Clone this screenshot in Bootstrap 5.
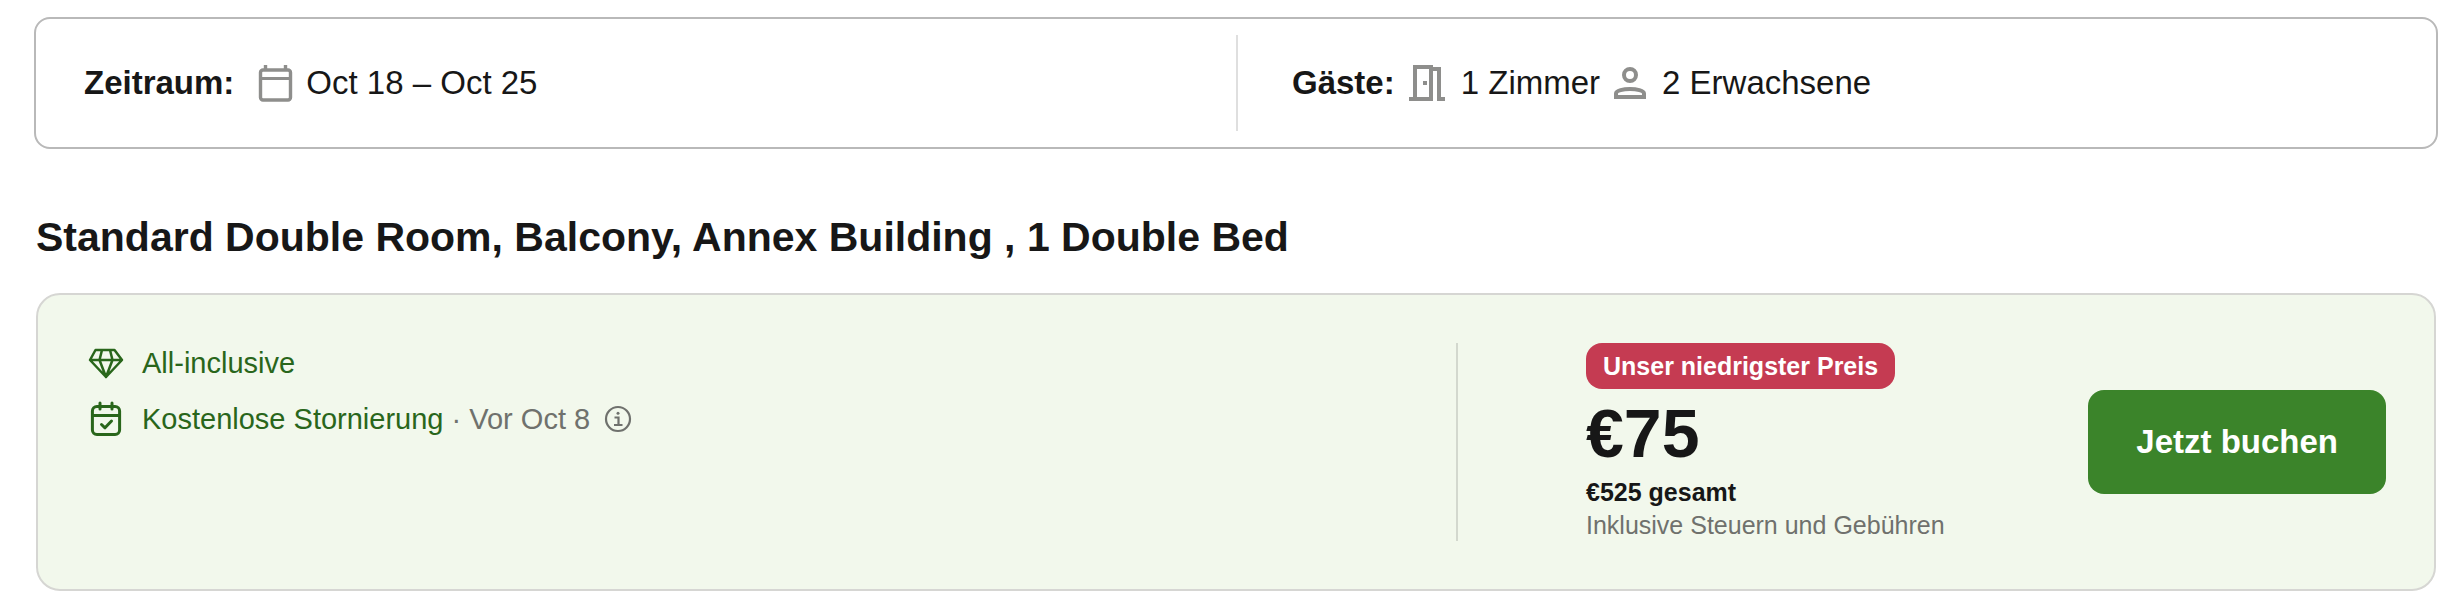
<!DOCTYPE html>
<html lang="de">
<head>
<meta charset="utf-8">
<meta name="viewport" content="width=device-width, initial-scale=1">
<title>Zimmerangebot</title>
<link rel="stylesheet" href="https://cdn.jsdelivr.net/npm/bootstrap@5.3.0/dist/css/bootstrap.min.css">
<style>
body{font-family:"Liberation Sans",Arial,sans-serif;color:#171717;background:#fff;font-size:29px;line-height:40px}
.page{padding:17px 16px 24px 34px}
.stay{border:2px solid #b9b9b9;border-radius:16px;padding:16px 0;font-size:33px;line-height:40px}
.stay-part{min-height:96px;padding:0 48px}
.stay-part + .stay-part{border-left:2px solid #dfdfdf;padding-left:54px}
.ico{color:#8e8e8c;flex:none;margin:0 16px 0 14px}
.ico-date{margin:0 12px 0 24px}
.offer-wrap{padding:0 2px}
.room-title{font-size:41px;line-height:48px;font-weight:700;margin:64px 0 32px}
.offer{background:#f2f8ec;border:2px solid #d6d6d3;border-radius:24px;padding:48px;display:grid;grid-template-columns:1370fr 930fr}
.perks{color:#29661b;gap:16px}
.perk-icon{margin-right:18px}
.muted{color:#6f716d}
.info{margin-left:14px}
.deal{border-left:2px solid #d3d8ce;padding-left:128px}
.best{background:#c53b52;color:#fff;font-size:25px;line-height:30px;font-weight:700;padding:8px 17px;border-radius:16px}
.price{font-size:68px;line-height:72px;font-weight:700;margin-top:8px}
.total{font-size:25px;line-height:34px;font-weight:700;margin-top:6px}
.tax{font-size:25px;line-height:32px}
.btn-book{background:#3b842a;color:#fff;border:0;border-radius:16px;font-size:33px;line-height:40px;font-weight:700;padding:32px 48px}
.btn-book:hover{background:#2f6d21;color:#fff}
</style>
</head>
<body>
<main class="page">
  <section class="stay row g-0">
    <div class="col-6 stay-part d-flex align-items-center">
      <strong>Zeitraum:</strong>
      <svg class="ico ico-date" width="36" height="38" viewBox="0 0 36 38" fill="none" stroke="currentColor" aria-hidden="true"><rect x="2.5" y="6" width="30" height="30" rx="2.5" stroke-width="3.4"/><path d="M2 14.500h31" stroke-width="3"/><path d="M7.5 1v5M27.500 1v5" stroke-width="3.4"/></svg>
      <span>Oct 18 – Oct 25</span>
    </div>
    <div class="col-6 stay-part d-flex align-items-center">
      <strong>Gäste:</strong>
      <svg class="ico" width="36" height="36" viewBox="0 0 36 36" fill="none" stroke="currentColor" stroke-width="4" aria-hidden="true"><path d="M0 34h22V2H6v32M24 4h6v30h6"/><path d="M16 16v4" /></svg>
      <span>1 Zimmer</span>
      <svg class="ico" width="32" height="32" viewBox="0 0 32 32" fill="none" stroke="currentColor" stroke-width="4" aria-hidden="true"><circle cx="16" cy="8" r="6"/><path d="M2 30v-3.500c0-3 7.500-4.500 14-4.500s14 1.500 14 4.500V30z"/></svg>
      <span>2 Erwachsene</span>
    </div>
  </section>

  <section class="offer-wrap">
    <h1 class="room-title">Standard Double Room, Balcony, Annex Building , 1 Double Bed</h1>
    <div class="offer">
      <div class="perks d-flex flex-column">
        <div class="d-flex align-items-center">
          <svg class="perk-icon" width="38" height="36" viewBox="0 0 38 36" fill="none" stroke="currentColor" stroke-width="2.500" stroke-linejoin="round" aria-hidden="true"><path d="M9.500 5h19l7.500 10-16 17L4 15zM4 15h32M16 5l-2.500 10L20 32l6.500-17L24 5"/></svg>
          <span>All-inclusive</span>
        </div>
        <div class="d-flex align-items-center">
          <svg class="perk-icon" width="38" height="36" viewBox="0 0 38 36" fill="none" stroke="currentColor" stroke-width="3" stroke-linecap="round" stroke-linejoin="round" aria-hidden="true"><rect x="6.400" y="5.400" width="27.200" height="28.200" rx="4.500"/><path d="M6.500 14.500h27M14 2v6M26 2v6M15.500 23.500l3.500 3.300 6.500-6.800"/></svg>
          <span>Kostenlose Stornierung <span class="muted">· Vor Oct 8</span></span>
          <svg class="muted info" width="28" height="28" viewBox="0 0 28 28" fill="none" stroke="currentColor" stroke-width="2.200" role="img" aria-label="Info"><circle cx="14" cy="14" r="12"/><path d="M10.500 12.500h4v7.500M10 20h8.500"/><circle cx="14" cy="8.300" r="1.500" fill="currentColor" stroke="none"/></svg>
        </div>
      </div>
      <div class="deal d-flex align-items-center justify-content-between">
        <div class="d-flex flex-column align-items-start">
          <span class="best">Unser niedrigster Preis</span>
          <span class="price">€75</span>
          <span class="total">€525 gesamt</span>
          <span class="tax muted">Inklusive Steuern und Gebühren</span>
        </div>
        <button type="button" class="btn btn-book">Jetzt buchen</button>
      </div>
    </div>
  </section>
</main>
<script src="https://cdn.jsdelivr.net/npm/bootstrap@5.3.0/dist/js/bootstrap.bundle.min.js"></script>
</body>
</html>
